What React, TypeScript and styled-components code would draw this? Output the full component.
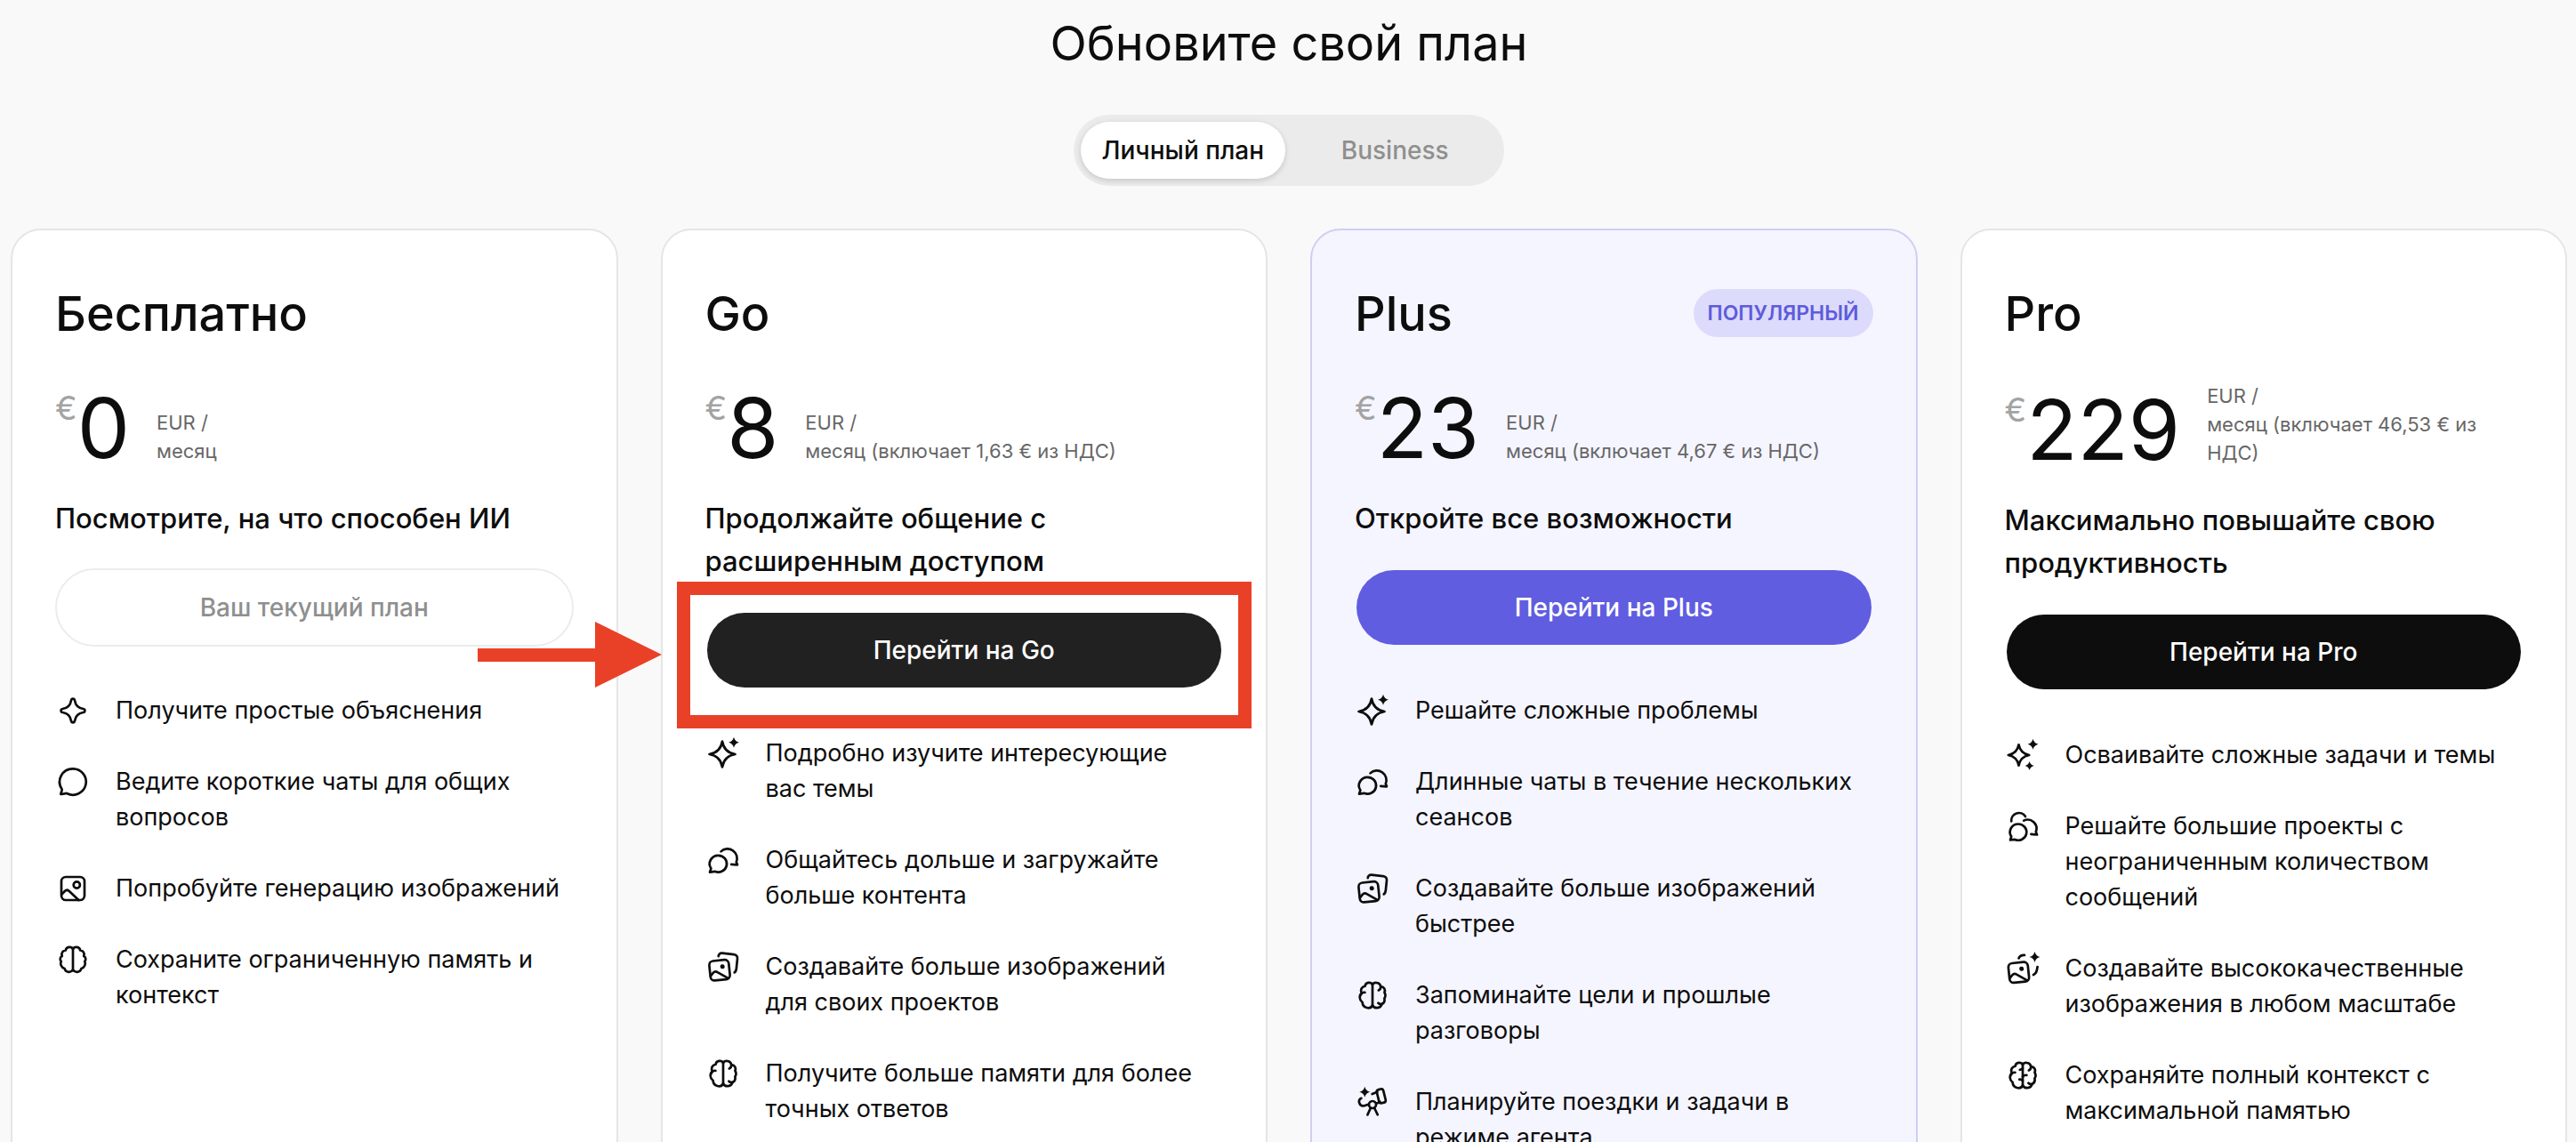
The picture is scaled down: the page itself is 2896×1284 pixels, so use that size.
import React from "react";
import styled, { createGlobalStyle, css } from "styled-components";

type Tone = "current" | "dark" | "accent" | "black";
type IconName =
  | "spark"
  | "sparkPlus"
  | "sparkTriple"
  | "chat"
  | "chats"
  | "chatsTriple"
  | "image"
  | "images"
  | "imagesPlus"
  | "brain"
  | "brainPlus"
  | "brainFull"
  | "telescope";

interface Plan {
  id: string;
  name: string;
  badge?: string;
  price: string;
  period: string;
  tagline: string;
  action: string;
  tone: Tone;
  features: { icon: IconName; text: string }[];
}

const plans: Plan[] = [
  {
    id: "free",
    name: "Бесплатно",
    price: "0",
    period: "месяц",
    tagline: "Посмотрите, на что способен ИИ",
    action: "Ваш текущий план",
    tone: "current",
    features: [
      { icon: "spark", text: "Получите простые объяснения" },
      { icon: "chat", text: "Ведите короткие чаты для общих вопросов" },
      { icon: "image", text: "Попробуйте генерацию изображений" },
      { icon: "brain", text: "Сохраните ограниченную память и контекст" },
    ],
  },
  {
    id: "go",
    name: "Go",
    price: "8",
    period: "месяц (включает 1,63 € из НДС)",
    tagline: "Продолжайте общение с расширенным доступом",
    action: "Перейти на Go",
    tone: "dark",
    features: [
      { icon: "sparkPlus", text: "Подробно изучите интересующие вас темы" },
      { icon: "chats", text: "Общайтесь дольше и загружайте больше контента" },
      { icon: "images", text: "Создавайте больше изображений для своих проектов" },
      { icon: "brainPlus", text: "Получите больше памяти для более точных ответов" },
    ],
  },
  {
    id: "plus",
    name: "Plus",
    badge: "ПОПУЛЯРНЫЙ",
    price: "23",
    period: "месяц (включает 4,67 € из НДС)",
    tagline: "Откройте все возможности",
    action: "Перейти на Plus",
    tone: "accent",
    features: [
      { icon: "sparkPlus", text: "Решайте сложные проблемы" },
      { icon: "chats", text: "Длинные чаты в течение нескольких сеансов" },
      { icon: "images", text: "Создавайте больше изображений быстрее" },
      { icon: "brainPlus", text: "Запоминайте цели и прошлые разговоры" },
      { icon: "telescope", text: "Планируйте поездки и задачи в режиме агента" },
    ],
  },
  {
    id: "pro",
    name: "Pro",
    price: "229",
    period: "месяц (включает 46,53 € из НДС)",
    tagline: "Максимально повышайте свою продуктивность",
    action: "Перейти на Pro",
    tone: "black",
    features: [
      { icon: "sparkTriple", text: "Осваивайте сложные задачи и темы" },
      { icon: "chatsTriple", text: "Решайте большие проекты с неограниченным количеством сообщений" },
      { icon: "imagesPlus", text: "Создавайте высококачественные изображения в любом масштабе" },
      { icon: "brainFull", text: "Сохраняйте полный контекст с максимальной памятью" },
    ],
  },
];

const GlobalStyle = createGlobalStyle`
  *, *::before, *::after { box-sizing: border-box; }
  body {
    margin: 0;
    background: #f9f9f9;
    color: #0d0d0d;
    font-family: Inter, "Noto Sans", sans-serif;
    -webkit-font-smoothing: antialiased;
  }
  button { font-family: inherit; cursor: pointer; }
`;

const Page = styled.main`
  display: flex;
  flex-direction: column;
  align-items: center;
  gap: 48px;
  height: 100vh;
  overflow: hidden;
  padding: 17px 10px 0 12px;
`;

const Heading = styled.h1`
  margin: 0;
  font-size: 54px;
  line-height: 64px;
  font-weight: 400;
`;

const Switcher = styled.div`
  display: grid;
  grid-template-columns: 1fr 1fr;
  gap: 8px;
  padding: 8px;
  border-radius: 40px;
  background: #ebebeb;
`;

const SwitchButton = styled.button<{ $active?: boolean }>`
  height: 64px;
  padding: 0 24px;
  border: 0;
  border-radius: 32px;
  font-size: 28px;
  line-height: 40px;
  font-weight: 500;
  background: transparent;
  color: #8f8f8f;
  ${(p) =>
    p.$active &&
    css`
      background: #ffffff;
      color: #0d0d0d;
      box-shadow: 0 2px 6px rgba(0, 0, 0, 0.16);
    `}
`;

const PlanGrid = styled.div`
  display: grid;
  grid-template-columns: repeat(4, minmax(0, 1fr));
  gap: 48px;
  align-self: stretch;
  flex: 1 0 auto;
`;

const Card = styled.section<{ $accent: boolean }>`
  padding: 62px 48px 48px;
  border: 2px solid ${(p) => (p.$accent ? "#cfcef2" : "#e5e5e5")};
  border-radius: 34px;
  background: ${(p) => (p.$accent ? "#f5f5ff" : "#ffffff")};
`;

const CardHeader = styled.div`
  display: flex;
  align-items: flex-start;
  justify-content: space-between;
  height: 64px;
`;

const PlanName = styled.h2`
  margin: 0;
  font-size: 54px;
  line-height: 64px;
  font-weight: 500;
`;

const Badge = styled.span`
  margin-top: 4px;
  padding: 11px 16px;
  border-radius: 27px;
  background: #dcdbfb;
  color: #5f5bdb;
  font-size: 23px;
  line-height: 32px;
  font-weight: 600;
`;

const PriceRow = styled.div`
  display: flex;
  align-items: flex-end;
  margin-top: 44px;
`;

const Price = styled.div`
  display: flex;
  align-items: flex-start;
  font-size: 94px;
  line-height: 104px;
`;

const Currency = styled.span`
  padding-top: 6px;
  font-size: 37px;
  line-height: 48px;
  color: #a3a3a3;
`;

const Billing = styled.p`
  display: flex;
  flex-direction: column;
  margin: 0 0 10px 30px;
  font-size: 22px;
  line-height: 32px;
  color: #676767;
`;

const Tagline = styled.p`
  margin: 26px 0 0;
  font-size: 31px;
  line-height: 48px;
  font-weight: 500;
`;

const ActionArea = styled.div`
  position: relative;
  margin-top: 32px;
`;

const toneStyles = {
  current: css`
    border-color: #ececec;
    background: transparent;
    color: #8f8f8f;
  `,
  dark: css`
    background-color: #212121;
  `,
  accent: css`
    background-color: #605de0;
  `,
  black: css`
    background-color: #0d0d0d;
  `,
};

const ActionButton = styled.button<{ $tone: Tone }>`
  display: block;
  width: 100%;
  height: 88px;
  border: 2px solid transparent;
  border-radius: 44px;
  background-clip: padding-box;
  color: #ffffff;
  font-size: 28px;
  line-height: 40px;
  font-weight: 500;
  ${(p) => toneStyles[p.$tone]}
`;

const Highlight = styled.div`
  position: absolute;
  inset: -33px -32px -44px;
  border: 15px solid #e94127;
  pointer-events: none;
`;

const Arrow = styled.svg`
  position: absolute;
  top: 12px;
  right: calc(100% + 49px);
  width: 207px;
  height: 74px;
  fill: #e94127;
  pointer-events: none;
`;

const FeatureList = styled.ul`
  display: flex;
  flex-direction: column;
  gap: 40px;
  margin: 52px 0 0;
  padding: 0 13px 0 0;
  list-style: none;
`;

const Feature = styled.li`
  display: flex;
  align-items: flex-start;
  gap: 28px;
  font-size: 27px;
  line-height: 40px;
`;

const IconSvg = styled.svg`
  flex: none;
  width: 40px;
  height: 40px;
  overflow: visible;
  fill: none;
  stroke: currentColor;
  stroke-width: 2.7;
  stroke-linecap: round;
  stroke-linejoin: round;
`;

const Star = ({ x, y, r }: { x: number; y: number; r: number }) => {
  const k = r * 0.2;
  return (
    <path
      fill="currentColor"
      stroke="none"
      d={`M${x} ${y - r}Q${x + k} ${y - k} ${x + r} ${y}Q${x + k} ${y + k} ${x} ${y + r}Q${x - k} ${y + k} ${x - r} ${y}Q${x - k} ${y - k} ${x} ${y - r}Z`}
    />
  );
};

const BrainOutline = () => (
  <>
    <path d="M20 8V32" />
    <path d="M20 8C18.5 5 12.5 5 11.8 9.5C8.3 9.8 6.6 12.8 7.8 16C5.2 17 5.2 20.5 6.8 22C5.2 24.5 6.8 29 10.6 30C11.8 34.8 17.8 34.8 20 31.5" />
    <path d="M20 8C21.5 5 27.5 5 28.2 9.5C31.7 9.8 33.4 12.8 32.2 16C34.8 17 34.8 20.5 33.2 22C34.8 24.5 33.2 29 29.4 30C28.2 34.8 22.2 34.8 20 31.5" />
  </>
);

const BrainFolds = () => (
  <>
    <path d="M20 8V32" />
    <path d="M20 8C18.5 4.9 12.2 5 11.6 9.8C7.6 10.6 6 14 7.8 17.6C4.6 20.6 5.2 25.6 8.6 27.8C9 34.4 17.4 36.4 20 31.5" />
    <path d="M11.4 16.8C9.4 16.6 7.6 17.6 6.8 19.4" />
    <path d="M20 8C21.5 4.9 28.6 5 29.2 10.2C33.4 10.6 34.8 14 33.4 16.8C35 19.4 35 21.4 33.4 23.4C34 26.6 33 28.8 30.6 29.8C29 35 22.4 35.6 20 31.5" />
    <path d="M26.8 14.4C28.6 13.6 29.4 12 29.2 10.2" />
    <path d="M26.4 28.8C27.4 29.8 29.2 30.2 30.6 29.8" />
  </>
);

const PictureTile = ({ x, y }: { x: number; y: number }) => (
  <g transform={`translate(${x} ${y}) rotate(-6)`}>
    <rect x="-11" y="-11" width="22" height="22" rx="4.6" />
    <path d="M-10.5 5.2L-7.6 2.4C-6 .9-4.2.8-2.6 2.1L8.6 10" />
    <circle cx="3.6" cy="-3.8" r="2.5" fill="currentColor" stroke="none" />
  </g>
);

const icons: Record<IconName, React.ReactNode> = {
  spark: (
    <path d="M20 6.6C21.1 6.6 21.8 7.3 22 8.4C22.8 14 26 17.2 31.6 18C32.7 18.2 33.4 18.9 33.4 20C33.4 21.1 32.7 21.8 31.6 22C26 22.8 22.8 26 22 31.6C21.8 32.7 21.1 33.4 20 33.4C18.9 33.4 18.2 32.7 18 31.6C17.2 26 14 22.8 8.4 22C7.3 21.8 6.6 21.1 6.6 20C6.6 18.9 7.3 18.2 8.4 18C14 17.2 17.2 14 18 8.4C18.2 7.3 18.9 6.6 20 6.6Z" />
  ),
  sparkPlus: (
    <>
      <path d="M19 6.5C20.3 14.5 25 19.7 33.5 21C25 22.3 20.3 27.5 19 35.5C17.7 27.5 13 22.3 4.5 21C13 19.7 17.7 14.5 19 6.5Z" />
      <Star x={32} y={7.7} r={6} />
    </>
  ),
  sparkTriple: (
    <>
      <path d="M15.5 8.3C16.7 14.7 20.5 18.8 27.2 20C20.5 21.2 16.7 25.3 15.5 31.7C14.3 25.3 10.5 21.2 3.8 20C10.5 18.8 14.3 14.7 15.5 8.3Z" />
      <Star x={31.5} y={7.7} r={6} />
      <Star x={27.6} y={32} r={5} />
    </>
  ),
  chat: (
    <path d="M20 5.3A14.7 14.7 0 1 1 13.6 33.2C12.8 32.9 12.2 32.9 11.6 33.1L7 34C6.4 34.1 6.1 33.7 6.4 33.2L7.6 29.6C7.8 29 7.7 28.6 7.4 28A14.7 14.7 0 0 1 20 5.3Z" />
  ),
  chats: (
    <>
      <path d="M14.4 14.8A9.6 9.4 0 1 1 10.6 32.8L5 33.6L6.4 29.4A9.6 9.4 0 0 1 14.4 14.8Z" />
      <path d="M17.5 10.4A10.7 10.7 0 0 1 34.8 22.2L36 25.3L29.2 24.8" />
    </>
  ),
  chatsTriple: (
    <>
      <path d="M15 17.5A9.3 9.1 0 1 1 11.2 34.9L6 35.4L7.2 31.6A9.3 9.1 0 0 1 15 17.5Z" />
      <path d="M21.2 13.6A10 10 0 0 1 34.8 26.2L36 29.5L29.4 28.8" />
      <path d="M7.2 14.4A8.6 8.6 0 0 1 23 9" />
    </>
  ),
  image: (
    <>
      <rect x="7" y="7" width="26" height="26" rx="5" />
      <circle cx="24.3" cy="16" r="3.6" />
      <path d="M7.4 26.6L10.8 23C12.4 21.4 14 21.4 15.6 22.8L26.4 33" />
    </>
  ),
  images: (
    <>
      <PictureTile x={16} y={23.8} />
      <path d="M14.7 8.2C14.9 5.8 16.5 4.4 18.9 4.7L31.9 6.1C34.7 6.4 36.3 8.2 36 10.9L34.8 22.5C34.6 24.3 33.8 25.6 32.7 26.4" />
    </>
  ),
  imagesPlus: (
    <>
      <PictureTile x={15.5} y={24.3} />
      <path d="M15.5 8.4C16.6 5.8 18.8 4.6 22 4.8" />
      <path d="M36.6 18L35.8 22.2C35.2 24.6 34 26.2 32 27" />
      <Star x={33.5} y={7} r={6} />
    </>
  ),
  brain: <BrainOutline />,
  brainPlus: <BrainFolds />,
  brainFull: (
    <>
      <BrainFolds />
      <path d="M16.8 13.8C18.2 13.8 19.2 13.2 20 12.2" />
      <path d="M24.4 19.8C22.6 19.6 21 20.2 20 21.6" />
      <path d="M16.2 24.6C17.8 24.4 19.2 25 20 26.2" />
    </>
  ),
  telescope: (
    <>
      <Star x={11.3} y={8.7} r={6} />
      <rect x="26" y="5.6" width="7.6" height="15.6" rx="2.6" transform="rotate(-14 29.8 13.4)" />
      <path d="M19.6 11L25.4 8.8" />
      <path d="M24.2 21.8L28.6 20" />
      <circle cx="20" cy="23" r="4" />
      <path d="M17.8 27L14.4 34.4M22.2 27L25.8 34.4" />
      <path d="M7.4 15.8C4.6 17 4.4 19 5.4 21.6C6.4 24.2 8.2 25 10.8 24.2L15.4 22.8" />
    </>
  ),
};

const PlanCard = ({ plan }: { plan: Plan }) => (
  <Card $accent={plan.tone === "accent"} aria-labelledby={`plan-${plan.id}`}>
    <CardHeader>
      <PlanName id={`plan-${plan.id}`}>{plan.name}</PlanName>
      {plan.badge && <Badge>{plan.badge}</Badge>}
    </CardHeader>
    <PriceRow>
      <Price>
        <Currency>€</Currency>
        <span>{plan.price}</span>
      </Price>
      <Billing>
        <span>EUR /</span>
        <span>{plan.period}</span>
      </Billing>
    </PriceRow>
    <Tagline>{plan.tagline}</Tagline>
    <ActionArea>
      <ActionButton type="button" $tone={plan.tone}>
        {plan.action}
      </ActionButton>
      {plan.id === "go" && (
        <>
          <Highlight />
          <Arrow viewBox="0 0 207 74" aria-hidden="true">
            <path d="M0 30H132V0L207 37L132 74V45H0Z" />
          </Arrow>
        </>
      )}
    </ActionArea>
    <FeatureList>
      {plan.features.map((f) => (
        <Feature key={f.text}>
          <IconSvg viewBox="0 0 40 40" aria-hidden="true">
            {icons[f.icon]}
          </IconSvg>
          <span>{f.text}</span>
        </Feature>
      ))}
    </FeatureList>
  </Card>
);

export default function App() {
  const [tab, setTab] = React.useState("personal");
  return (
    <>
      <GlobalStyle />
      <Page>
        <Heading>Обновите свой план</Heading>
        <Switcher>
          <SwitchButton
            type="button"
            $active={tab === "personal"}
            aria-pressed={tab === "personal"}
            onClick={() => setTab("personal")}
          >
            Личный план
          </SwitchButton>
          <SwitchButton
            type="button"
            $active={tab === "business"}
            aria-pressed={tab === "business"}
            onClick={() => setTab("business")}
          >
            Business
          </SwitchButton>
        </Switcher>
        <PlanGrid>
          {plans.map((plan) => (
            <PlanCard key={plan.id} plan={plan} />
          ))}
        </PlanGrid>
      </Page>
    </>
  );
}
